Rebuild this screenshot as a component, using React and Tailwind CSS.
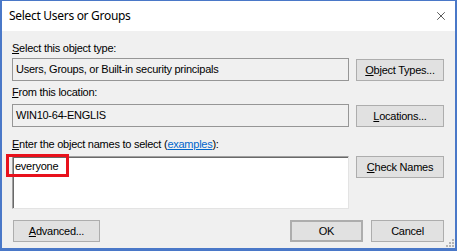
import { X } from "lucide-react";

/* -------------------- Helpers -------------------- */
const Key = ({ children }) => <span className="underline underline-offset-[1px]">{children}</span>;

function Button({ k, rest, className = "" }) {
  return (
    <button
      className={`flex h-[22px] items-center justify-center border border-[#adadad] bg-[#e1e1e1] text-[11px] tracking-[-0.25px] text-black ${className}`}
    >
      <span>
        {k && <Key>{k}</Key>}
        {rest}
      </span>
    </button>
  );
}

function ReadOnlyBox({ value }) {
  return (
    <div className="flex h-[23px] w-[337px] items-center border border-[#969696] bg-[#f0f0f0] pl-[3px] text-[11px] tracking-[-0.25px] text-black">
      {value}
    </div>
  );
}

/* -------------------- Main -------------------- */
export default function App() {
  return (
    <div
      className="flex h-[251px] w-[457px] flex-col border-t border-l-2 border-r-2 border-b-[3px] border-[#4a78c8] bg-[#f0f0f0] text-black"
      style={{ fontFamily: '"Liberation Sans", Arial, sans-serif' }}
    >
      {/* Title bar */}
      <div className="flex h-[30px] shrink-0 items-center justify-between bg-white pl-[7px] pr-[7px]">
        <span className="text-[12px] tracking-[-0.3px]" style={{ fontFamily: '"Noto Sans", sans-serif' }}>
          Select Users or Groups
        </span>
        <X size={14} strokeWidth={1.1} className="text-black" />
      </div>

      {/* Body */}
      <div className="relative flex flex-1 flex-col pl-[10px] pr-[11px] pt-[11px] text-[11px] tracking-[-0.25px]">
        <div className="h-[13px] leading-[13px]">
          <Key>S</Key>elect this object type:
        </div>
        <div className="mt-[3px] flex items-start justify-between">
          <ReadOnlyBox value="Users, Groups, or Built-in security principals" />
          <Button k="O" rest="bject Types..." className="mt-[1px] w-[88px]" />
        </div>

        <div className="mt-[5px] h-[13px] leading-[13px]">
          <Key>F</Key>rom this location:
        </div>
        <div className="mt-[5px] flex items-start justify-between">
          <ReadOnlyBox value="WIN10-64-ENGLIS" />
          <Button k="L" rest="ocations..." className="mt-[1px] w-[88px]" />
        </div>

        <div className="mt-[11px] h-[13px] leading-[13px]">
          <Key>E</Key>nter the object names to select (
          <span className="text-[#0066cc] underline">examples</span>):
        </div>
        <div className="mt-[5px] flex items-start justify-between">
          <div className="relative h-[53px] w-[337px] border border-[#a0a0a0] border-b-[#e3e3e3] border-r-[#e3e3e3] bg-white shadow-[inset_1px_1px_0_#696969]">
            <div className="pl-[2px] pt-[3px] leading-[13px]">everyone</div>
          </div>
          <Button k="C" rest="heck Names" className="w-[88px]" />
        </div>

        {/* red annotation box */}
        <div className="absolute left-[4px] top-[123px] h-[23px] w-[63px] border-[3px] border-[#e8111c]" />

        <div className="mt-[11px] flex items-center justify-between">
          <Button k="A" rest="dvanced..." className="ml-[1px] w-[87px]" />
          <div className="flex gap-[8px]">
            <Button rest="OK" className="w-[73px] border-2 border-[#0078d7]" />
            <Button rest="Cancel" className="w-[73px]" />
          </div>
        </div>

        {/* resize grip */}
        <svg className="absolute bottom-[1px] right-[1px]" width="8" height="8" viewBox="0 0 8 8">
          <rect x="6" y="0" width="2" height="2" fill="#b4b4b4" />
          <rect x="3" y="3" width="2" height="2" fill="#b4b4b4" />
          <rect x="6" y="3" width="2" height="2" fill="#b4b4b4" />
          <rect x="0" y="6" width="2" height="2" fill="#b4b4b4" />
          <rect x="3" y="6" width="2" height="2" fill="#b4b4b4" />
          <rect x="6" y="6" width="2" height="2" fill="#b4b4b4" />
        </svg>
      </div>
    </div>
  );
}
